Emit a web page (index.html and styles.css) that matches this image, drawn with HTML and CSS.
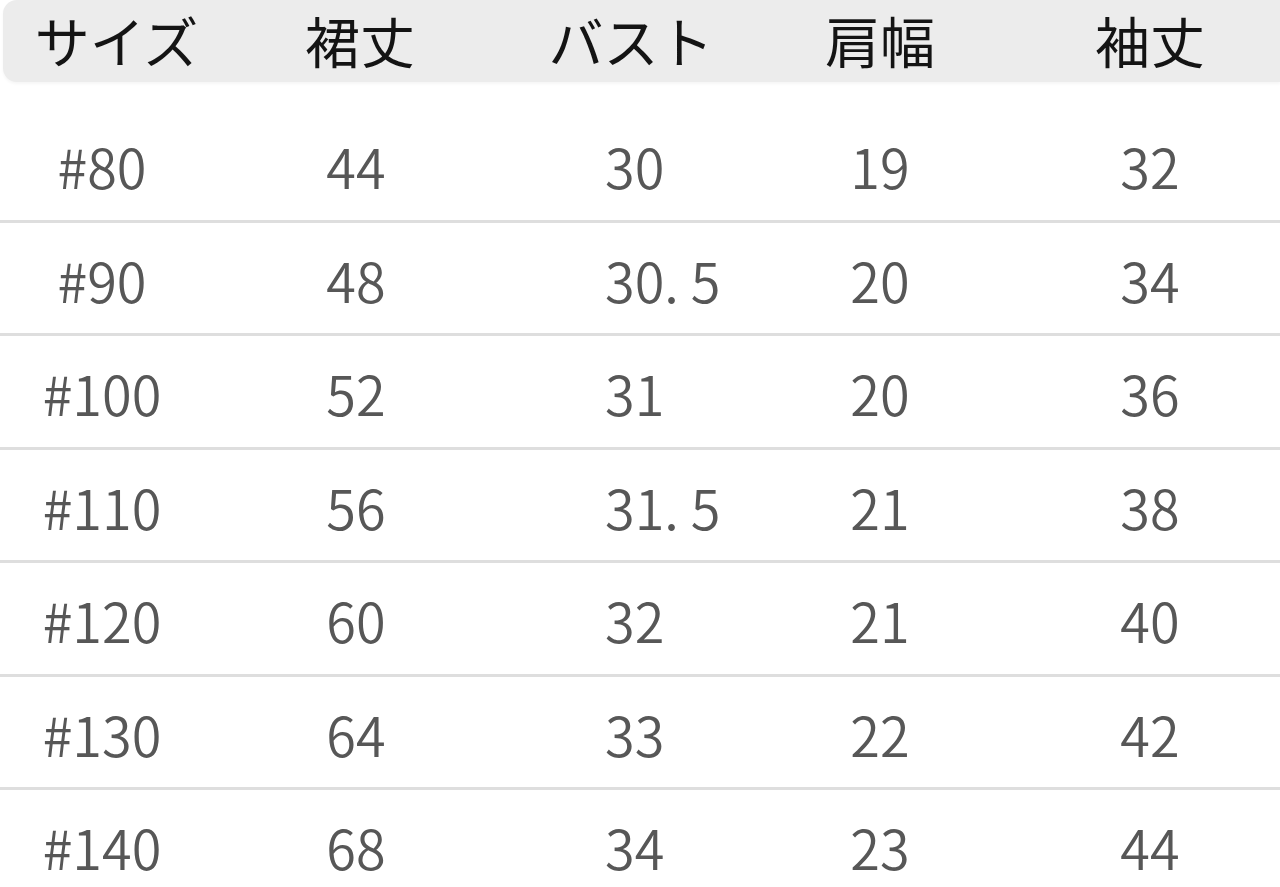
FILE: index.html
```html
<!DOCTYPE html>
<html lang="ja">
<head>
<meta charset="utf-8">
<title>サイズ表</title>
<link rel="stylesheet" href="styles.css">
</head>
<body>
<div class="chart">
  <div class="head">
    <div class="hc c1">サイズ</div>
    <div class="hc c2">裙丈</div>
    <div class="hc c3">バスト</div>
    <div class="hc c4">肩幅</div>
    <div class="hc c5">袖丈</div>
  </div>
  <div class="rows">
    <div class="row"><div class="c c1">#80</div><div class="c c2">44</div><div class="c c3">30</div><div class="c c4">19</div><div class="c c5">32</div></div>
    <div class="row"><div class="c c1">#90</div><div class="c c2">48</div><div class="c c3">30. 5</div><div class="c c4">20</div><div class="c c5">34</div></div>
    <div class="row"><div class="c c1">#100</div><div class="c c2">52</div><div class="c c3">31</div><div class="c c4">20</div><div class="c c5">36</div></div>
    <div class="row"><div class="c c1">#110</div><div class="c c2">56</div><div class="c c3">31. 5</div><div class="c c4">21</div><div class="c c5">38</div></div>
    <div class="row"><div class="c c1">#120</div><div class="c c2">60</div><div class="c c3">32</div><div class="c c4">21</div><div class="c c5">40</div></div>
    <div class="row"><div class="c c1">#130</div><div class="c c2">64</div><div class="c c3">33</div><div class="c c4">22</div><div class="c c5">42</div></div>
    <div class="row last"><div class="c c1">#140</div><div class="c c2">68</div><div class="c c3">34</div><div class="c c4">23</div><div class="c c5">44</div></div>
  </div>
</div>
</body>
</html>
```
FILE: styles.css
```css
html, body {
  margin: 0;
  padding: 0;
  background: #ffffff;
}
body {
  width: 1280px;
  height: 887px;
  overflow: hidden;
  font-family: "Noto Sans CJK JP", "Noto Sans", sans-serif;
}
.chart {
  display: flex;
  flex-direction: column;
}
.head {
  display: grid;
  grid-template-columns: 201px 304px 232px 280px 260px;
  align-items: center;
  height: 82px;
  margin-left: 3px;
  background: #ececec;
  border-radius: 14px 0 0 14px;
  box-shadow: 0 2px 3px rgba(0, 0, 0, 0.04);
}
.hc {
  text-align: center;
  font-size: 55px;
  line-height: 1;
  color: #141414;
  padding-bottom: 4px;
}
.hc.c1 { padding-left: 26px; }
.hc.c2 { padding-left: 8px; }
.hc.c3 { padding-left: 14px; }
.hc.c5 { padding-left: 0; }
.rows {
  display: flex;
  flex-direction: column;
  margin-top: 27px;
}
.row {
  display: grid;
  grid-template-columns: 204px 304px 232px 280px 260px;
  align-items: center;
  height: 110.5px;
  border-bottom: 3px solid #dedede;
}
.row.last {
  border-bottom: none;
}
.c {
  text-align: center;
  font-size: 54px;
  font-weight: 350;
  line-height: 1;
  color: #575757;
  padding-top: 4px;
}
.c.c3 {
  text-align: left;
  padding-left: 97px;
}
```
